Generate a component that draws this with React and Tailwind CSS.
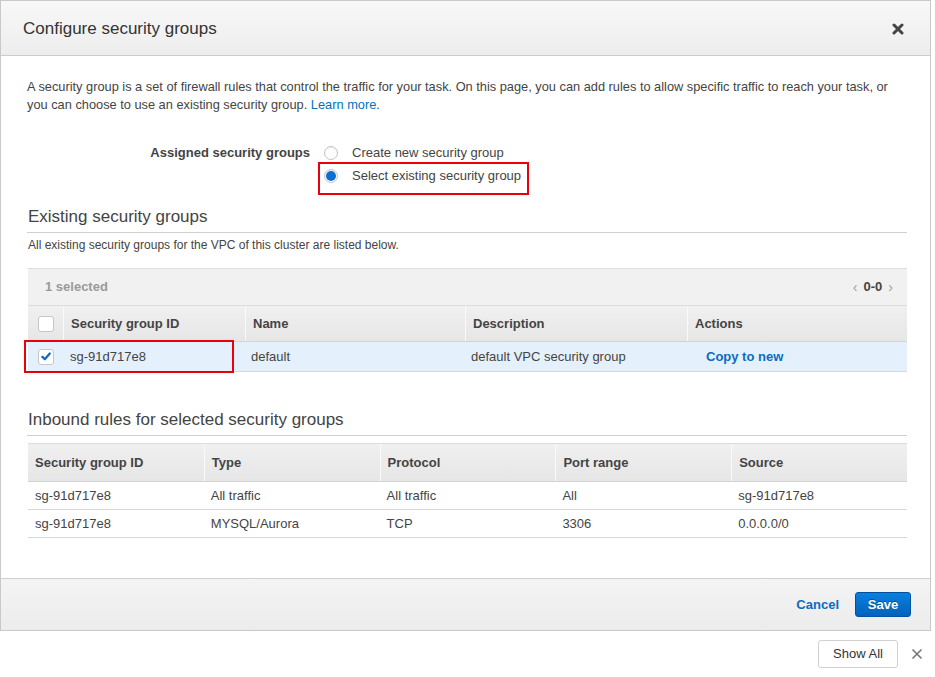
import React from 'react';

const font = { fontFamily: '"Liberation Sans", Arial, Helvetica, sans-serif' };

const Radio = ({ checked }) => (
  <span className="w-[14px] h-[14px] rounded-full border border-[#c4c4c4] bg-white flex items-center justify-center shadow-[inset_0_1px_1px_rgba(0,0,0,0.08)]">
    {checked && <span className="w-[10px] h-[10px] rounded-full bg-[#0b6fcf]" />}
  </span>
);

const Checkbox = ({ checked }) => (
  <span className="w-[16px] h-[16px] rounded-[3px] border border-[#c6c6c6] bg-white flex items-center justify-center">
    {checked && (
      <svg width="10" height="9" viewBox="0 0 10 9">
        <path d="M1.3 4.8 L3.8 7.3 L8.8 1.5" fill="none" stroke="#0f68c4" strokeWidth="2.2" strokeLinecap="round" strokeLinejoin="round" />
      </svg>
    )}
  </span>
);

const inbound = [
  ['sg-91d717e8', 'All traffic', 'All traffic', 'All', 'sg-91d717e8'],
  ['sg-91d717e8', 'MYSQL/Aurora', 'TCP', '3306', '0.0.0.0/0'],
];

export default function App() {
  return (
    <div className="relative w-[935px] h-[677px] bg-white text-[#333] text-[13px] overflow-hidden" style={font}>
      {/* modal */}
      <div className="w-[931px] border border-[#c9c9c9] bg-white">
        {/* header */}
        <div className="h-[55px] pt-[1px] px-[22px] flex items-center justify-between bg-gradient-to-b from-[#f8f8f8] to-[#ededed] border-b border-[#cccccc]">
          <h2 className="text-[17px] text-[#333]">Configure security groups</h2>
          <svg width="12" height="12" viewBox="0 0 12 12" className="mr-[4px]">
            <path d="M2 2 L10 10 M10 2 L2 10" stroke="#444" strokeWidth="3" strokeLinecap="round" />
          </svg>
        </div>

        {/* body */}
        <div className="h-[522px] pl-[26px] pr-[23px] pt-[22px]">
          <p className="leading-[18px] text-[12.8px] text-[#444]">
            A security group is a set of firewall rules that control the traffic for your task. On this page, you can add rules to allow specific traffic to reach your task, or you can choose to use an existing security group. <span className="text-[#0073bb]">Learn more</span>.
          </p>

          <div className="mt-[27px] flex">
            <div className="w-[283px] h-[23px] flex items-center justify-end font-bold text-[#444]">Assigned security groups</div>
            <div className="ml-[14px] flex flex-col">
              <label className="h-[23px] flex items-center gap-[14px] text-[#444]">
                <Radio />
                Create new security group
              </label>
              <label className="h-[23px] flex items-center gap-[14px] text-[#444]">
                <Radio checked />
                Select existing security group
              </label>
            </div>
          </div>

          <h3 className="mt-[18px] h-[28px] pl-[1px] text-[17px] leading-[24px] text-[#444] border-b border-[#cfcfcf]">Existing security groups</h3>
          <p className="mt-[4px] pl-[1px] text-[12px] leading-[16px] text-[#444]">All existing security groups for the VPC of this cluster are listed below.</p>

          {/* existing groups table */}
          <div className="mt-[15px] ml-[1px]">
            <div className="h-[37px] border-t border-[#dcdcdc] bg-[#f1f1f1] flex items-center justify-between pl-[17px] pr-[14px]">
              <span className="font-bold text-[#9a9a9a]">1 selected</span>
              <span className="flex items-center gap-[6px]">
                <span className="text-[#a0a0a0] text-[14px]">‹</span>
                <span className="font-bold text-[#444]">0-0</span>
                <span className="text-[#a0a0a0] text-[14px]">›</span>
              </span>
            </div>
            <div className="h-[37px] flex border-t border-[#dcdcdc] border-b border-b-[#d4d4d4] bg-gradient-to-b from-[#f0f0f0] to-[#e6e6e6] font-bold text-[#444]">
              <div className="w-[35px] flex items-center justify-center"><Checkbox /></div>
              <div className="w-[182px] flex items-center pl-[7px] border-l border-[#fafafa]">Security group ID</div>
              <div className="w-[220px] flex items-center pl-[7px] border-l border-[#fafafa]">Name</div>
              <div className="w-[222px] flex items-center pl-[7px] border-l border-[#fafafa]">Description</div>
              <div className="flex-1 flex items-center pl-[7px] border-l border-[#fafafa]">Actions</div>
            </div>
            <div className="h-[30px] flex bg-[#e4f1fc] border-b border-[#d8d8d8] text-[#444]">
              <div className="w-[35px] flex items-center justify-center"><Checkbox checked /></div>
              <div className="w-[182px] flex items-center pl-[7px]">sg-91d717e8</div>
              <div className="w-[220px] flex items-center pl-[6px]">default</div>
              <div className="w-[222px] flex items-center pl-[6px]">default VPC security group</div>
              <div className="flex-1 flex items-center pl-[19px] font-bold text-[#0a6cc2]">Copy to new</div>
            </div>
          </div>

          <h3 className="mt-[36px] h-[28px] pl-[1px] text-[17px] leading-[24px] text-[#444] border-b border-[#cfcfcf]">Inbound rules for selected security groups</h3>

          {/* inbound table */}
          <div className="mt-[7px] ml-[1px]">
            <div className="h-[39px] grid grid-cols-5 border-t border-[#dcdcdc] border-b border-b-[#d4d4d4] bg-gradient-to-b from-[#f0f0f0] to-[#e6e6e6] font-bold text-[#444]">
              {['Security group ID', 'Type', 'Protocol', 'Port range', 'Source'].map((h, i) => (
                <div key={h} className={`flex items-center pl-[7px] ${i > 0 ? 'border-l border-[#fafafa]' : ''}`}>{h}</div>
              ))}
            </div>
            {inbound.map((row, r) => (
              <div key={r} className="h-[28px] grid grid-cols-5 border-b border-[#d8d8d8] text-[#444]">
                {row.map((c, i) => (
                  <div key={i} className="flex items-center pl-[7px]">{c}</div>
                ))}
              </div>
            ))}
          </div>
        </div>

        {/* footer */}
        <div className="h-[52px] border-t border-[#cfcfcf] bg-gradient-to-b from-[#f4f4f4] to-[#ececec] flex items-center justify-end pr-[19px]">
          <span className="font-bold text-[#0a6cc2] mr-[16px]">Cancel</span>
          <button className="w-[56px] h-[25px] rounded-[3px] border border-[#0052a0] bg-gradient-to-b from-[#0b7fdd] to-[#0063bd] text-white font-bold [text-shadow:0_-1px_0_rgba(0,0,0,0.35)]">Save</button>
        </div>
      </div>

      {/* bottom bar */}
      <div className="flex items-center justify-end mt-[9px] pr-[12px]">
        <button className="w-[80px] h-[28px] rounded-[3px] border border-[#d0d0d0] bg-white text-[#333]">Show All</button>
        <svg width="12" height="12" viewBox="0 0 12 12" className="ml-[13px]">
          <path d="M1.5 1.5 L10.5 10.5 M10.5 1.5 L1.5 10.5" stroke="#777" strokeWidth="1.6" />
        </svg>
      </div>

      {/* annotation boxes */}
      <div className="absolute left-[318px] top-[162px] w-[211px] h-[33px] border-2 border-[#e8000b] pointer-events-none" />
      <div className="absolute left-[24px] top-[340px] w-[210px] h-[33px] border-2 border-[#e8000b] pointer-events-none" />
    </div>
  );
}
